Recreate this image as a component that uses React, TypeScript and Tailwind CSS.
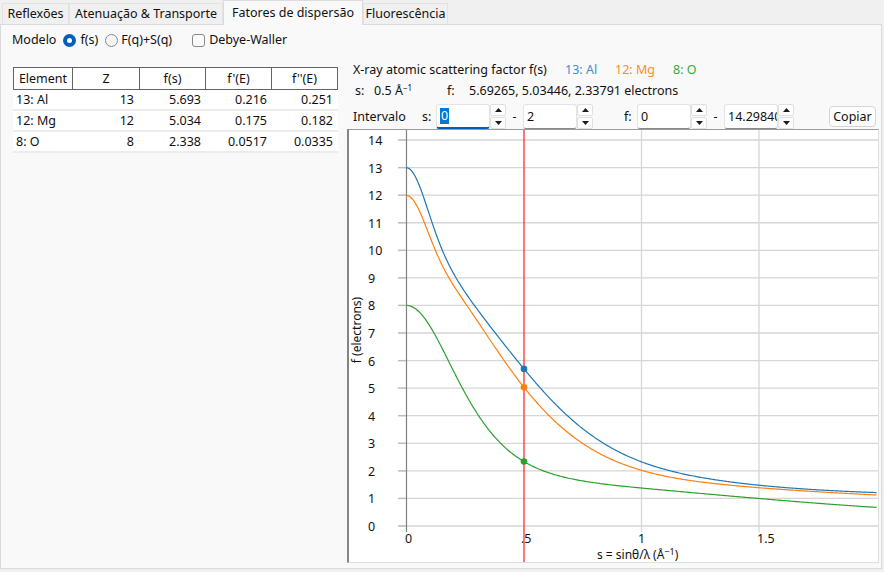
import React from "react";

type El = { label: string; color: string; a: number[]; b: number[]; c: number };

const ELEMENTS: El[] = [
  { label: "13: Al", color: "#1f77b4", a: [6.4202, 1.9002, 1.5936, 1.9646], b: [3.0387, 0.7426, 31.5472, 85.0886], c: 1.1151 },
  { label: "12: Mg", color: "#ff7f0e", a: [5.4204, 2.1735, 1.2269, 2.3073], b: [2.8275, 79.2611, 0.3808, 7.1937], c: 0.8584 },
  { label: "8: O", color: "#2ca02c", a: [3.0485, 2.2868, 1.5463, 0.867], b: [13.2771, 5.7011, 0.3239, 32.9089], c: 0.2508 },
];

const ROWS = [
  ["13: Al", "13", "5.693", "0.216", "0.251"],
  ["12: Mg", "12", "5.034", "0.175", "0.182"],
  ["8: O", "8", "2.338", "0.0517", "0.0335"],
];

const sf = (el: El, s: number) => el.a.reduce((acc, a, i) => acc + a * Math.exp(-el.b[i] * s * s), el.c);

// plot geometry (inside chart border)
const X0 = 57.5;
const XS = 235;
const Y0 = 396;
const YS = 27.57;
const px = (s: number) => X0 + s * XS;
const py = (f: number) => Y0 - f * YS;

function curve(el: El) {
  let d = "";
  for (let i = 0; i <= 400; i++) {
    const s = i * 0.005;
    d += `${i === 0 ? "M" : "L"}${px(s).toFixed(2)},${py(sf(el, s)).toFixed(2)}`;
  }
  return d;
}

function Tab({ label, w, active }: { label: string; w: string; active?: boolean }) {
  return (
    <div
      className={`${w} flex items-center justify-center border border-b-0 ${
        active
          ? "h-[25px] bg-[#f9f9f9] border-[#dcdcdc] relative z-10 -mb-px"
          : "h-[21px] bg-[#f0f0f0] border-[#e2e2e2]"
      }`}
    >
      {label}
    </div>
  );
}

function Tri({ down }: { down?: boolean }) {
  return (
    <svg width="7" height="4" viewBox="0 0 7 4">
      <polygon points={down ? "0,0 7,0 3.5,4" : "0,4 7,4 3.5,0"} fill="#1b1b1b" />
    </svg>
  );
}

function Spin({ value, focused }: { value: string; focused?: boolean }) {
  return (
    <div className="flex h-[25px]">
      <div
        className={`w-[54px] h-full bg-white border border-[#e3e3e3] rounded-[3px] flex items-center pl-[3px] overflow-hidden whitespace-nowrap ${
          focused ? "border-b-2 border-b-[#005fb8]" : "border-b-[#8a8a8a]"
        }`}
      >
        {focused ? <span className="bg-[#0078d7] text-white px-[1px] leading-[16px]">{value}</span> : <span>{value}</span>}
      </div>
      <div className="w-[16px] flex flex-col gap-[1px]">
        <div className="h-[12px] bg-[#fdfdfd] border border-[#e0e0e0] rounded-[2px] flex items-center justify-center">
          <Tri />
        </div>
        <div className="h-[12px] bg-[#fdfdfd] border border-[#e0e0e0] rounded-[2px] flex items-center justify-center">
          <Tri down />
        </div>
      </div>
    </div>
  );
}

function Chart() {
  const ys = Array.from({ length: 15 }, (_, i) => i);
  const xl = [
    { t: "0", x: 56 },
    { t: ".5", x: 172 },
    { t: "1", x: 289 },
    { t: "1.5", x: 408 },
  ];
  return (
    <div className="h-[434px] w-[532px] bg-white border-l-2 border-t border-l-[#858585] border-t-[#9a9a9a] border-r border-b border-r-[#e0e0e0] border-b-[#e0e0e0]">
      <svg width="529" height="432" className="block" style={{ fontFamily: "'Noto Sans', sans-serif" }}>
        {ys.map((v) => (
          <g key={v}>
            <line x1={49} x2={529} y1={py(v)} y2={py(v)} stroke="#d6d6d6" strokeWidth={1.3} />
            <line x1={49} x2={X0} y1={py(v)} y2={py(v)} stroke="#bdbdbd" strokeWidth={1.3} />
            <text x={19} y={py(v) + 5} fontSize={12.5} fill="#111">
              {v}
            </text>
          </g>
        ))}
        {[1, 1.5].map((s) => (
          <line key={s} x1={px(s)} x2={px(s)} y1={0} y2={Y0 + 6} stroke="#d6d6d6" strokeWidth={1.3} />
        ))}
        <line x1={X0} x2={X0} y1={0} y2={Y0 + 6} stroke="#808080" strokeWidth={1.2} />
        {xl.map((l) => (
          <text key={l.t} x={l.x} y={413} fontSize={12.5} fill="#111">
            {l.t}
          </text>
        ))}
        <text x={248} y={429} fontSize={12} fill="#111">
          s = sinθ/λ (Å<tspan dy={-4} fontSize={9}>−1</tspan>
          <tspan dy={4}>)</tspan>
        </text>
        <text x={12} y={200} fontSize={12} fill="#111" textAnchor="middle" transform="rotate(-90 12 200)">
          f (electrons)
        </text>
        {ELEMENTS.map((el) => (
          <path key={el.label} d={curve(el)} fill="none" stroke={el.color} strokeWidth={1.2} />
        ))}
        <line x1={px(0.5)} x2={px(0.5)} y1={0} y2={432} stroke="#ff3b3b" strokeWidth={1.4} />
        {ELEMENTS.map((el) => (
          <circle key={el.label} cx={px(0.5)} cy={py(sf(el, 0.5))} r={3.3} fill={el.color} />
        ))}
      </svg>
    </div>
  );
}

export default function App() {
  return (
    <div className="w-[884px] h-[572px] bg-[#f0f0f0] text-[12.5px] leading-[16px] text-[#111] font-['Noto_Sans',sans-serif] overflow-hidden">
      {/* tabs */}
      <div className="flex items-end h-[24px] pl-[2px]">
        <Tab label="Reflexões" w="w-[67px]" />
        <Tab label="Atenuação & Transporte" w="w-[154px]" />
        <Tab label="Fatores de dispersão" w="w-[140px]" active />
        <Tab label="Fluorescência" w="w-[85px]" />
      </div>

      <div className="w-[882px] h-[545px] bg-[#f9f9f9] border border-[#dadada] flex flex-col">
        {/* modelo */}
        <div className="h-[20px] mt-[5px] pl-[11px] flex items-center">
          <span className="mr-[7px]">Modelo</span>
          <span className="w-[13px] h-[13px] rounded-full bg-[#005fb8] flex items-center justify-center mr-[4px]">
            <span className="w-[5px] h-[5px] rounded-full bg-white" />
          </span>
          <span className="mr-[7px]">f(s)</span>
          <span className="w-[13px] h-[13px] rounded-full border border-[#8a8a8a] bg-[#f5f5f5] mr-[3px]" />
          <span className="mr-[20px]">F(q)+S(q)</span>
          <span className="w-[13px] h-[13px] rounded-[3px] border border-[#8a8a8a] bg-[#fbfbfb] mr-[4px]" />
          <span>Debye-Waller</span>
        </div>

        <div className="flex flex-1">
          {/* table */}
          <div className="w-[346px] pl-[12px] pt-[17px]">
            <div className="w-[325px] bg-white">
              <div className="flex h-[23px] border border-[#646464] bg-white">
                {["Element", "Z", "f(s)", "f'(E)", "f''(E)"].map((h, i) => (
                  <div
                    key={h}
                    className={`${i === 0 ? "w-[59px]" : i === 1 ? "w-[67px]" : "w-[66px]"} flex items-center justify-center ${
                      i < 4 ? "border-r border-[#646464]" : "flex-1"
                    }`}
                  >
                    {h}
                  </div>
                ))}
              </div>
              {ROWS.map((r) => (
                <div key={r[0]} className="flex h-[21px] items-center border-b-2 border-[#ececec]">
                  <div className="w-[60px] pl-[3px]">{r[0]}</div>
                  <div className="w-[67px] text-right pr-[6px]">{r[1]}</div>
                  <div className="w-[66px] text-right pr-[5px]">{r[2]}</div>
                  <div className="w-[66px] text-right pr-[5px]">{r[3]}</div>
                  <div className="flex-1 text-right pr-[5px]">{r[4]}</div>
                </div>
              ))}
            </div>
          </div>

          {/* chart side */}
          <div className="w-[532px] flex flex-col">
            <div className="h-[20px] mt-[10px] pl-[6px] flex items-center">
              <span className="w-[212px]">X-ray atomic scattering factor f(s)</span>
              <span className="w-[50px] text-[#3b8fd6]">13: Al</span>
              <span className="w-[58px] text-[#ff8c2a]">12: Mg</span>
              <span className="text-[#3aab3a]">8: O</span>
            </div>
            <div className="h-[22px] pl-[8px] flex items-center">
              <span className="w-[19px]">s:</span>
              <span className="w-[73px]">
                0.5 Å<sup className="text-[8px]">−1</sup>
              </span>
              <span className="w-[22px]">f:</span>
              <span>5.69265, 5.03446, 2.33791 electrons</span>
            </div>
            <div className="h-[25px] mt-[2px] pl-[6px] flex items-center">
              <span className="w-[69px]">Intervalo</span>
              <span className="w-[14px]">s:</span>
              <Spin value="0" focused />
              <span className="w-[17px] text-center">-</span>
              <Spin value="2" />
              <span className="w-[31px]" />
              <span className="w-[13px]">f:</span>
              <Spin value="0" />
              <span className="w-[17px] text-center">-</span>
              <Spin value="14.29840" />
              <button className="ml-auto mr-[3px] w-[47px] h-[21px] bg-[#fdfdfd] border border-[#d5d5d5] rounded-[4px] flex items-center justify-center">
                Copiar
              </button>
            </div>
            <Chart />
          </div>
        </div>
      </div>
    </div>
  );
}
